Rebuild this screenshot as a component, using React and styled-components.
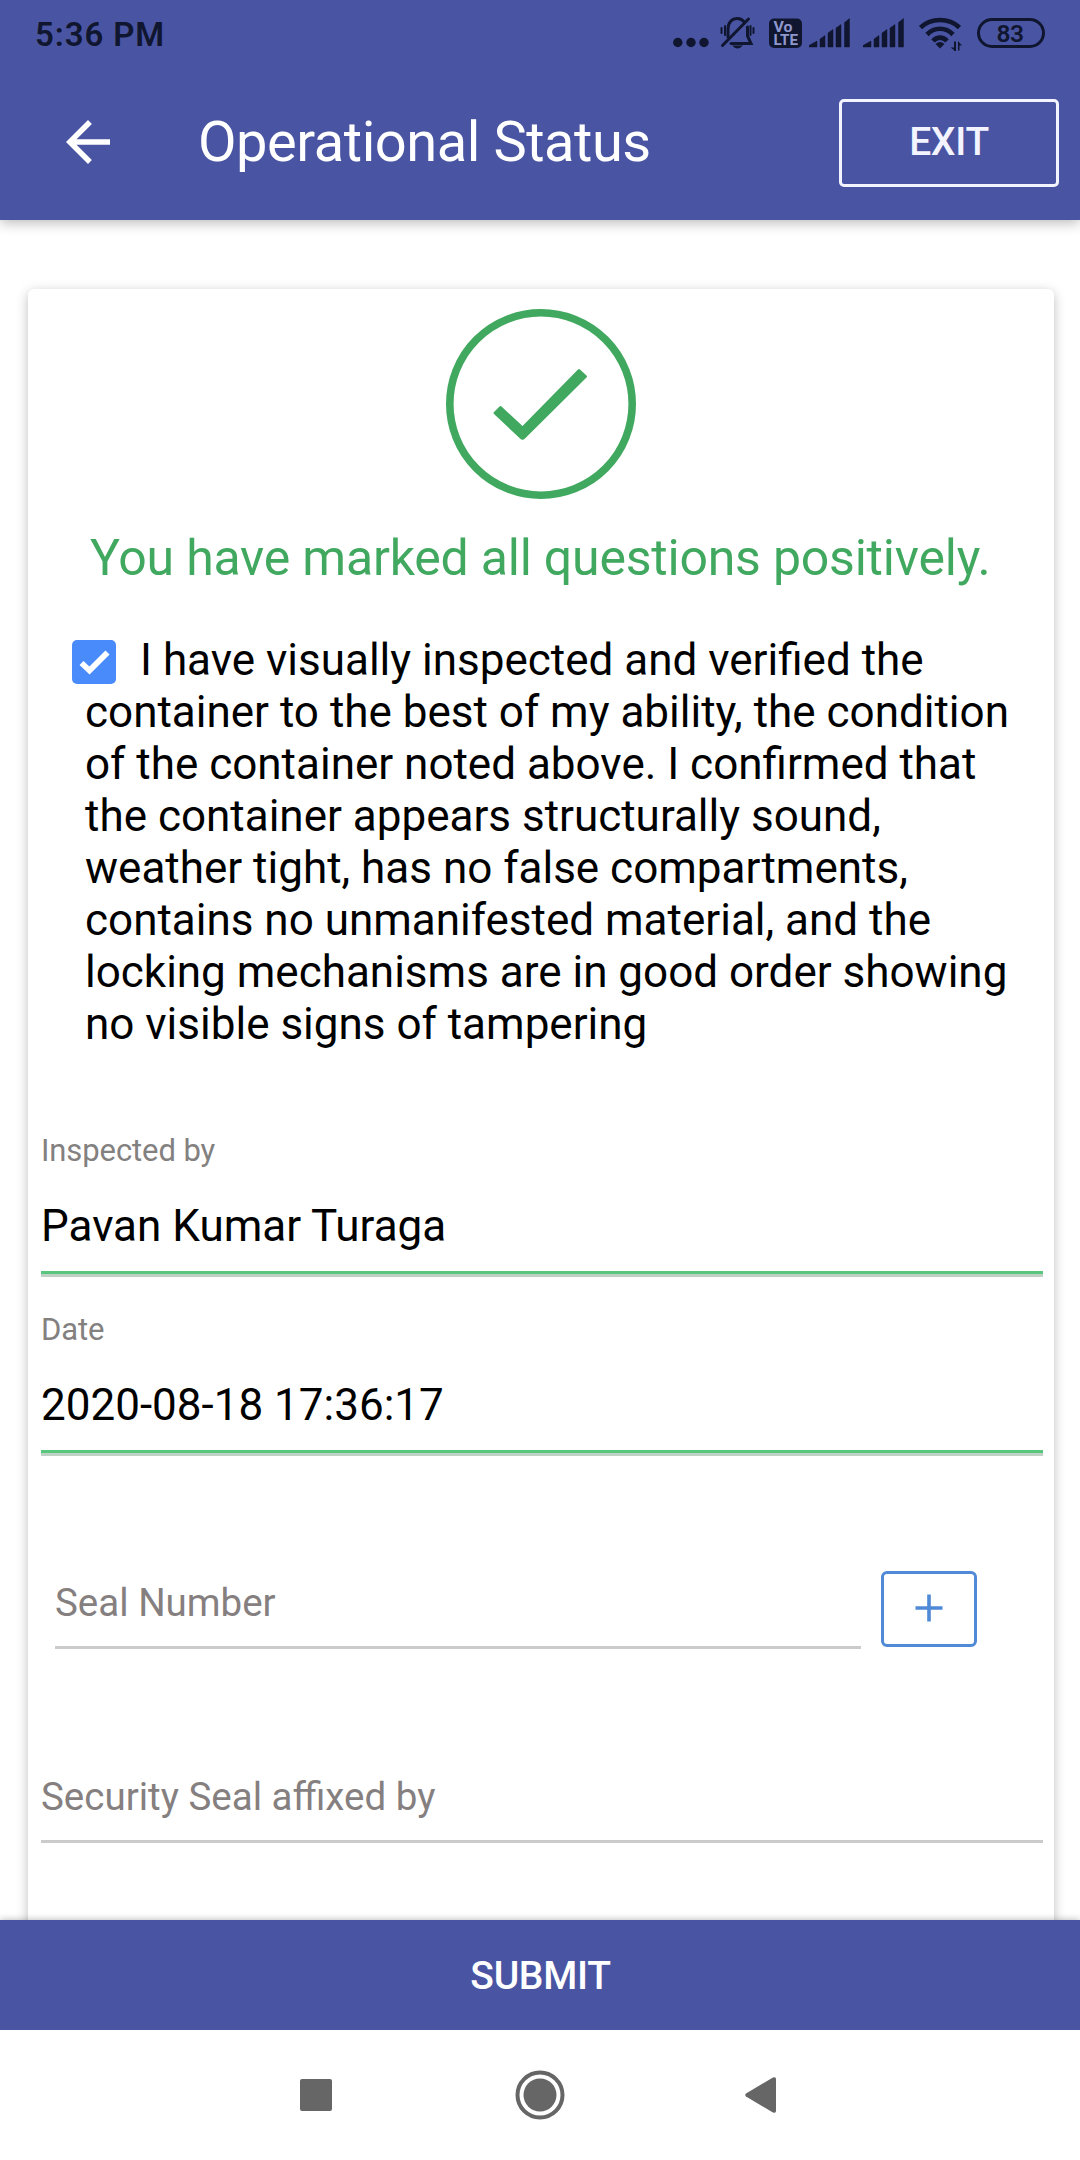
import React, { useState } from 'react';
import styled, { createGlobalStyle, css } from 'styled-components';

const primary = '#4955a3';
const success = '#41a85f';
const ink = '#10162f';

const GlobalStyle = createGlobalStyle`
    * {
        box-sizing: border-box;
    }
    body {
        margin: 0;
        background: #fff;
        font-family: Roboto, "Liberation Sans", sans-serif;
    }
    button, input {
        font-family: inherit;
    }
`;

const Screen = styled.div`
    width: 1080px;
    height: 2160px;
    display: flex;
    flex-direction: column;
    overflow: hidden;
    background: #fff;
`;

const TopArea = styled.header`
    position: relative;
    z-index: 2;
    flex: none;
    height: 220px;
    background: ${primary};
    box-shadow: 0 3px 12px rgba(0, 0, 0, 0.27);
`;

const StatusBar = styled.div`
    height: 66px;
    padding: 0 35px 0 35px;
    display: flex;
    justify-content: space-between;
    align-items: center;
    color: ${ink};
`;

const Clock = styled.span`
    padding-top: 3px;
    font-size: 33px;
    font-weight: 600;
    line-height: 66px;
    letter-spacing: 0.9px;
`;

const StatusIcons = styled.div`
    display: flex;
    align-items: center;
    svg {
        display: block;
    }
`;

const StatusIcon = styled.svg.attrs((p) => ({
    width: p.$w,
    height: 40,
    viewBox: `0 0 ${p.$w} 40`,
    fill: 'currentColor',
}))`
    flex: none;
    margin-left: ${(p) => p.$gap || 0}px;
`;

const Battery = styled.div`
    width: 68px;
    height: 30px;
    margin-left: 15px;
    border: 3px solid ${ink};
    border-radius: 15px;
    font-size: 24.5px;
    font-weight: 600;
    line-height: 25px;
    text-align: center;
    letter-spacing: -0.6px;
    padding-right: 2px;
`;

const AppBar = styled.div`
    height: 154px;
    padding: 0 21px 0 55px;
    display: flex;
    align-items: center;
`;

const BackButton = styled.button`
    width: 66px;
    height: 66px;
    padding: 0;
    border: 0;
    background: none;
    color: #fff;
    margin-bottom: 2px;
    svg {
        display: block;
    }
`;

const Title = styled.h1`
    flex: 1;
    margin: 0 0 2px 77px;
    font-size: 56px;
    font-weight: 400;
    line-height: 66px;
    letter-spacing: -0.45px;
    color: #fff;
    white-space: nowrap;
`;

const ExitButton = styled.button`
    width: 220px;
    height: 88px;
    padding: 0 0 3px;
    border: 3px solid #f3f4ff;
    border-radius: 5px;
    background: none;
    color: #f3f4ff;
    font-size: 39px;
    font-weight: 500;
    letter-spacing: -0.3px;
`;

const Content = styled.main`
    flex: 1;
    min-height: 0;
    padding: 69px 26px 0 28px;
    overflow: hidden;
`;

const Card = styled.section`
    height: 1700px;
    padding: 20px 11.5px 0 13px;
    border-radius: 6px;
    background: #fff;
    box-shadow: 0 3px 12px rgba(0, 0, 0, 0.26);
`;

const CheckMark = styled.svg`
    display: block;
    margin: 0 auto 0 404.6px;
`;

const Message = styled.h2`
    margin: 29px 0 0;
    padding-right: 3px;
    font-size: 50px;
    font-weight: 400;
    line-height: 60px;
    letter-spacing: -0.21px;
    text-align: center;
    white-space: nowrap;
    color: ${success};
`;

const Declaration = styled.p`
    margin: 46px 0 0;
    padding: 0 27px 0 44px;
    font-size: 44px;
    line-height: 52px;
    color: #000;
`;

const Checkbox = styled.button`
    display: inline-block;
    width: 44px;
    height: 44px;
    margin: 0 24px 0 -13px;
    padding: 0;
    border: 0;
    border-radius: 5px;
    background: #4a8bfc;
    vertical-align: -9px;
    svg {
        display: block;
    }
`;

const Field = styled.label`
    display: block;
    margin-top: ${(p) => p.$top}px;
`;

const FieldLabel = styled.span`
    display: block;
    padding-top: 1px;
    font-size: 31px;
    line-height: 36px;
    letter-spacing: -0.1px;
    color: #838080;
`;

const inputBase = css`
    display: block;
    width: 100%;
    padding: 0;
    border: 0;
    outline: 0;
    border-radius: 0;
    background: transparent;
`;

const FilledInput = styled.input`
    ${inputBase}
    height: 78px;
    margin-top: 30px;
    padding-bottom: 21px;
    border-bottom: 3px solid #bfd0c5;
    box-shadow: inset 0 -3px 0 #58c67c;
    font-size: 44px;
    line-height: 52px;
    color: #000;
`;

/* no letter-spacing here, it would break the "ffi" ligature */
const EmptyInput = styled.input`
    ${inputBase}
    height: ${(p) => p.$h}px;
    padding: ${(p) => p.$h - 71}px 0 20px;
    border-bottom: 3px solid #cbcbcb;
    font-size: 38.5px;
    line-height: 48px;
    &::placeholder {
        color: #857f7f;
        opacity: 1;
    }
`;

const SealRow = styled.div`
    display: flex;
    align-items: flex-start;
    gap: 20px;
    margin-top: 115px;
    padding: 0 65.5px 0 14px;
`;

const AddButton = styled.button`
    flex: none;
    width: 96px;
    height: 76px;
    padding: 0 0 3px;
    display: flex;
    align-items: center;
    justify-content: center;
    border: 3px solid #5089d6;
    border-radius: 6px;
    background: #fff;
    color: #5089d6;
`;

const SubmitButton = styled.button`
    position: relative;
    z-index: 2;
    flex: none;
    height: 110px;
    padding: 1px 0 0 1px;
    border: 0;
    background: ${primary};
    box-shadow: 0 0 7px rgba(0, 0, 0, 0.3);
    color: #fff;
    font-size: 39px;
    font-weight: 500;
    letter-spacing: -0.3px;
`;

const NavBar = styled.nav`
    position: relative;
    z-index: 3;
    flex: none;
    height: 130px;
    padding: 0 304px 0 300px;
    display: flex;
    align-items: center;
    justify-content: space-between;
    background: #fff;
    color: #666;
`;

const HomeIcon = styled.svg`
    margin-left: 3px;
`;

const SignalBars = ({ gap }) => (
    <StatusIcon $w={41} $gap={gap}>
        <path d="M0 34V32.5L8 28V34Z M11 34V26L16 22.5V34Z M19 34V20L24 16.5V34Z M27 34V15L32 11.5V34Z M35.5 34V9.5L40.5 5.5V34Z"
            stroke="currentColor" strokeWidth="0.5" strokeLinejoin="round" />
    </StatusIcon>
);

const StatusGlyphs = () => (
    <StatusIcons>
        <StatusIcon $w={36}>
            <circle cx="4.8" cy="29.5" r="4.7" />
            <circle cx="18" cy="29.5" r="4.7" />
            <circle cx="31" cy="29.5" r="4.7" />
        </StatusIcon>
        {/* muted bell */}
        <StatusIcon $w={35} $gap={11}>
            <g fill="none" stroke="currentColor" strokeWidth="3" strokeLinecap="round">
                <path d="M8 24V16C8 9.5 12 5.5 17.5 5.5C20 5.5 22 6.5 23.8 8.5" />
                <path d="M27.5 14V23L31 30.5H11" />
                <path d="M2.5 32.5L28.5 6" />
                <path d="M1.5 15V20M5 13V22M33.5 15V20M30.5 13V22" strokeWidth="2" />
            </g>
            <path d="M12 32.5H23Q17.5 38.5 12 32.5Z" />
        </StatusIcon>
        {/* VoLTE */}
        <StatusIcon $w={33} $gap={14}>
            <rect y="5.5" width="33" height="29.5" rx="5" />
            <g fill="#8f98cd" fontSize="14.5" fontWeight="700" fontFamily="Roboto, sans-serif">
                <text x="4.5" y="18.7" textLength="19" lengthAdjust="spacingAndGlyphs">Vo</text>
                <text x="4.5" y="32" textLength="24.5" lengthAdjust="spacingAndGlyphs">LTE</text>
            </g>
        </StatusIcon>
        <SignalBars gap={7} />
        <SignalBars gap={13} />
        {/* wifi with traffic arrows */}
        <StatusIcon $w={43} $gap={15}>
            <g fill="none" stroke="currentColor" strokeWidth="4.7">
                <path d="M1.5 14.5C12 4.5 30 4.5 40.5 14.5" />
                <path d="M8 21.5C15.5 13.8 26.5 13.8 34 21.5" />
                <path d="M14 28C18 23.5 24 23.5 28 28" />
            </g>
            <path d="M21 35.5L16.5 31Q21 27 25.5 31Z" />
            <path d="M35 28.5H37V38H35V34.5H31.5L35 37ZM39 28L43 32.5H40.5V37.5H39Z" />
        </StatusIcon>
        <Battery>83</Battery>
    </StatusIcons>
);

const App = () => {
    const [checked, setChecked] = useState(true);
    const [seal, setSeal] = useState('');
    const [affixedBy, setAffixedBy] = useState('');

    return (
        <>
            <GlobalStyle />
            <Screen>
                <TopArea>
                    <StatusBar>
                        <Clock>5:36 PM</Clock>
                        <StatusGlyphs />
                    </StatusBar>
                    <AppBar>
                        <BackButton aria-label="Back">
                            <svg width="66" height="66" viewBox="0 0 24 24" fill="currentColor">
                                <path d="M20 11H7.83l5.59-5.59L12 4l-8 8 8 8 1.41-1.41L7.83 13H20v-2z" />
                            </svg>
                        </BackButton>
                        <Title>Operational Status</Title>
                        <ExitButton>EXIT</ExitButton>
                    </AppBar>
                </TopArea>

                <Content>
                    <Card>
                        <CheckMark width="190" height="190" viewBox="0 0 190 190" fill="none" stroke={success}>
                            <circle cx="95" cy="95" r="91.2" strokeWidth="7.6" />
                            <path
                                d="M48 103L53.5 97.5Q54.5 96.5 55.5 97.5L76.5 117L132 60.5Q133 59.5 134 60.5L140.5 66.5Q141.5 67.5 140.5 68.5L79 129.5Q76.5 132 74 129.5L48 105Q47 104 48 103Z"
                                fill={success}
                                stroke="none"
                            />
                        </CheckMark>
                        <Message>You have marked all questions positively.</Message>
                        <Declaration>
                            <Checkbox role="checkbox" aria-checked={checked} onClick={() => setChecked(!checked)}>
                                <svg width="44" height="44" viewBox="0 0 44 44" fill="none">
                                    {checked && <path d="M9.5 23L17.5 30.5L35.5 12.5" stroke="#fff" strokeWidth="5.8" />}
                                </svg>
                            </Checkbox>
                            I have visually inspected and verified the container to the best of my ability,
                            the condition of the container noted above. I confirmed that the container appears
                            structurally sound, weather tight, has no false compartments, contains no
                            unmanifested material, and the locking mechanisms are in good order showing no
                            visible signs of tampering
                        </Declaration>

                        <Field $top={82}>
                            <FieldLabel>Inspected by</FieldLabel>
                            <FilledInput defaultValue="Pavan Kumar Turaga" />
                        </Field>
                        <Field $top={34}>
                            <FieldLabel>Date</FieldLabel>
                            <FilledInput defaultValue="2020-08-18 17:36:17" />
                        </Field>

                        <SealRow>
                            <EmptyInput $h={78} placeholder="Seal Number" value={seal} onChange={(e) => setSeal(e.target.value)} />
                            <AddButton aria-label="Add seal">
                                <svg width="28" height="28" viewBox="0 0 28 28" stroke="currentColor" strokeWidth="3.6">
                                    <path d="M14 0.5V27.5M0.5 14H27.5" />
                                </svg>
                            </AddButton>
                        </SealRow>

                        <Field $top={121}>
                            <EmptyInput
                                $h={73}
                                placeholder="Security Seal affixed by"
                                value={affixedBy}
                                onChange={(e) => setAffixedBy(e.target.value)}
                            />
                        </Field>
                    </Card>
                </Content>

                <SubmitButton>SUBMIT</SubmitButton>
                <NavBar>
                    <svg width="32" height="32" viewBox="0 0 32 32" fill="currentColor">
                        <rect width="32" height="32" rx="2" />
                    </svg>
                    <HomeIcon width="50" height="50" viewBox="0 0 50 50" fill="currentColor">
                        <circle cx="25" cy="25" r="22.5" fill="none" stroke="currentColor" strokeWidth="4" />
                        <circle cx="25" cy="25" r="16.5" />
                    </HomeIcon>
                    <svg width="31" height="36" viewBox="0 0 31 36" fill="currentColor">
                        <path d="M28 0.5Q31 -0.5 31 2V34Q31 36.5 28 35.5L1 19.5Q-0.5 18 1 16.5Z" />
                    </svg>
                </NavBar>
            </Screen>
        </>
    );
};

export default App;
